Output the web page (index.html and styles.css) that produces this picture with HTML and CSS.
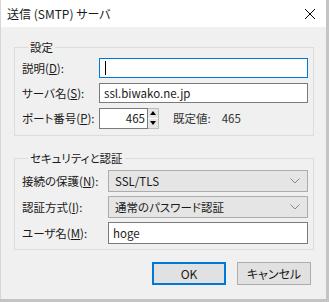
FILE: index.html
```html
<!DOCTYPE html>
<html lang="ja">
<head>
    <meta charset="UTF-8">
    <title>送信 (SMTP) サーバ</title>
    <link rel="stylesheet" href="styles.css">
</head>
<body>
    <div class="window">
        <div class="titlebar">
            <span class="title">送信 (SMTP) サーバ</span>
            <svg class="close" width="12" height="12" viewBox="0 0 12 12">
                <path d="M1 1 L11 11 M11 1 L1 11" stroke="#000" stroke-width="1" fill="none"/>
            </svg>
        </div>
        <div class="content">
            <fieldset class="group">
                <legend>設定</legend>
                <div class="row">
                    <label class="label">説明(<u>D</u>):</label>
                    <div class="input focused"><span class="caret"></span></div>
                </div>
                <div class="row">
                    <label class="label">サーバ名(<u>S</u>):</label>
                    <div class="input">ssl.biwako.ne.jp</div>
                </div>
                <div class="row">
                    <label class="label">ポート番号(<u>P</u>):</label>
                    <div class="input number">465</div>
                    <div class="spinner">
                        <span class="spin up"></span>
                        <span class="spin down"></span>
                    </div>
                    <span class="default-label">既定値:</span>
                    <span class="default-value">465</span>
                </div>
            </fieldset>

            <fieldset class="group second">
                <legend>セキュリティと認証</legend>
                <div class="row tall">
                    <label class="label wide">接続の保護(<u>N</u>):</label>
                    <div class="select">
                        <span>SSL/TLS</span>
                        <svg width="10" height="6" viewBox="0 0 10 6"><path d="M0.5 0.5 L5 5 L9.5 0.5" stroke="#888" fill="none"/></svg>
                    </div>
                </div>
                <div class="row tall">
                    <label class="label wide">認証方式(<u>I</u>):</label>
                    <div class="select">
                        <span>通常のパスワード認証</span>
                        <svg width="10" height="6" viewBox="0 0 10 6"><path d="M0.5 0.5 L5 5 L9.5 0.5" stroke="#888" fill="none"/></svg>
                    </div>
                </div>
                <div class="row tall">
                    <label class="label wide">ユーザ名(<u>M</u>):</label>
                    <div class="input">hoge</div>
                </div>
            </fieldset>

            <div class="buttons">
                <button class="btn default">OK</button>
                <button class="btn">キャンセル</button>
            </div>
        </div>
    </div>
</body>
</html>
```

FILE: styles.css
```css
* {
    box-sizing: border-box;
    margin: 0;
    padding: 0;
}

body {
    background-color: #c4c4c4;
    font-family: "Noto Sans CJK JP", "Noto Sans", sans-serif;
    font-size: 11.5px;
    font-feature-settings: "palt";
    color: #1a1a1a;
    width: 329px;
    height: 302px;
    overflow: hidden;
}

.window {
    width: 326px;
    height: 299px;
    background-color: #f0f0f0;
    border-left: 1px solid #d6d6d6;
}

.titlebar {
    height: 27px;
    background-color: #fff;
    display: flex;
    align-items: center;
    justify-content: space-between;
    padding: 0 10px 0 6px;
}

.title {
    font-size: 12px;
}

.content {
    padding: 12px 12px 0 13px;
}

.group {
    border: 1px solid #dcdcdc;
    padding: 3px 5px 7px 7px;
}

.group legend {
    line-height: 16px;
    height: 16px;
    padding: 0 2px;
    margin-left: 6px;
}

.group.second {
    margin-top: 14px;
    padding-top: 4px;
    padding-bottom: 5px;
}

.row {
    display: flex;
    align-items: center;
    height: 20px;
    margin-bottom: 5px;
}

.row:last-child {
    margin-bottom: 0;
}

.row.tall {
    height: 22px;
    margin-bottom: 4px;
}

.row.tall:last-child {
    margin-bottom: 0;
}

.label {
    width: 77px;
    flex-shrink: 0;
    white-space: nowrap;
}

.label.wide {
    width: 86px;
}

.input {
    flex: 1;
    height: 100%;
    background-color: #fff;
    border: 1px solid #7a7a7a;
    padding: 0 4px;
    line-height: 18px;
    display: flex;
    align-items: center;
}

.input.focused {
    border-color: #0078d7;
}

.caret {
    width: 1px;
    height: 14px;
    background-color: #000;
    margin-left: 1px;
}

.input.number {
    flex: 0 0 49px;
    justify-content: flex-end;
    padding-right: 2px;
    height: 21px;
}

.spinner {
    width: 11px;
    height: 21px;
    display: flex;
    flex-direction: column;
    border: 1px solid #bcbcbc;
    border-left: none;
    background-color: #fff;
}

.spin {
    flex: 1;
    background-color: #e6e6e6;
    border-bottom: 1px solid #fff;
    display: flex;
    align-items: center;
    justify-content: center;
}

.spin.down {
    border-bottom: none;
}

.spin::after {
    content: "";
    border-left: 3px solid transparent;
    border-right: 3px solid transparent;
}

.spin.up::after {
    border-bottom: 4px solid #000;
}

.spin.down::after {
    border-top: 4px solid #000;
}

.default-label {
    margin-left: 14px;
    color: #333;
}

.default-value {
    margin-left: 11px;
    color: #333;
}

.select {
    flex: 1;
    height: 100%;
    background-color: #e5e5e5;
    border: 1px solid #acacac;
    display: flex;
    align-items: center;
    justify-content: space-between;
    padding: 0 7px 0 6px;
}

.buttons {
    display: flex;
    justify-content: flex-end;
    gap: 11px;
    margin-top: 12px;
    padding-right: 3px;
}

.btn {
    width: 74px;
    height: 23px;
    background-color: #e1e1e1;
    border: 1px solid #adadad;
    font-family: inherit;
    font-size: 12px;
    font-feature-settings: "palt";
    color: #1a1a1a;
}

.btn.default {
    border: 2px solid #0078d7;
}
```
